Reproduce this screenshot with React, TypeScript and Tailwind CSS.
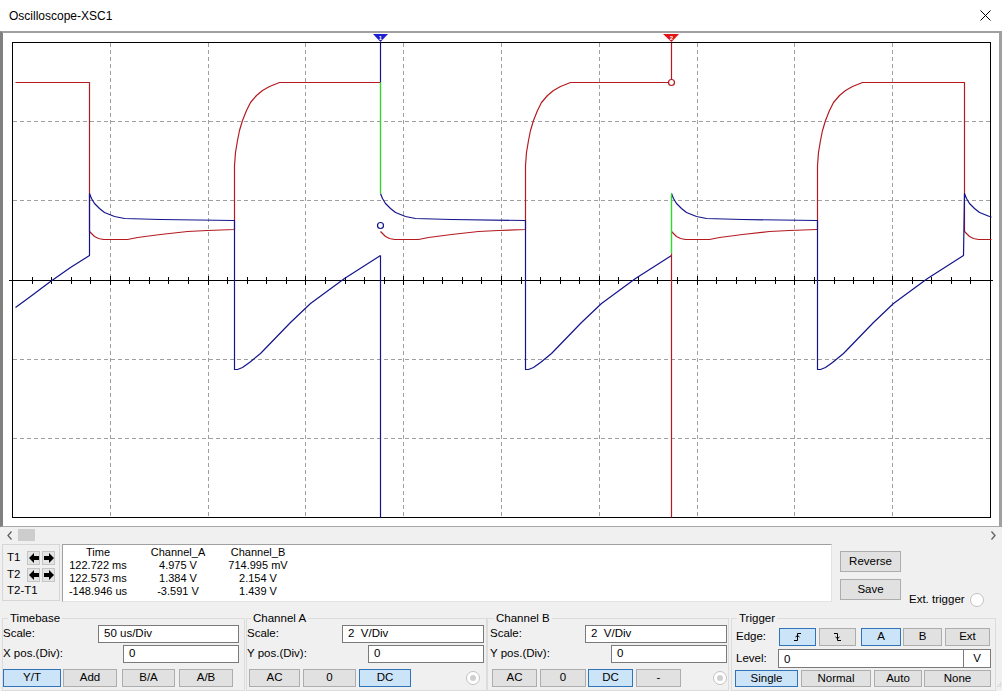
import React from 'react';

type Pt = [number, number];

// waveform geometry, in page pixels
const FALLS = [89, 380, 671, 964];
const RISES = [234, 525, 817];
const CURSORS = [380, 671];

const RED_LOW: Pt[] = [[0, 231], [2, 233], [5, 236], [9, 238], [14, 239], [38, 239], [48, 237], [71, 234], [98, 231], [118, 230], [145, 229]];
const RED_RISE: Pt[] = [[0, 165], [1, 152], [3, 140], [5, 130], [8, 120], [12, 110], [16, 102], [22, 95], [28, 90], [35, 86], [45, 82]];
const BLUE_DECAY: Pt[] = [[0, 193], [2, 198], [5, 203], [10, 208], [15, 212], [25, 216], [35, 218], [71, 219], [145, 220]];
const BLUE_RAMP: Pt[] = [[0, 369], [3, 369], [8, 367], [15, 362], [26, 353], [56, 322], [76, 303], [110, 278], [146, 255]];

const RED = '#b31b21';
const BLUE = '#14148c';
const GREEN = '#2ed82e';

const buildRed = () => {
  let d = 'M15,82 L89,82';
  FALLS.forEach((f, i) => {
    d += CURSORS.includes(f) ? ` M${f},231` : ` L${f},231`;
    RED_LOW.forEach(([dx, y]) => (d += ` L${f + dx},${y}`));
    const r = RISES[i];
    if (r !== undefined) {
      d += ` L${r},229`;
      RED_RISE.forEach(([dx, y]) => (d += ` L${r + dx},${y}`));
      d += ` L${FALLS[i + 1]},82`;
    }
  });
  return d;
};

const buildBlue = () => {
  let d = 'M15,307 L30,296 L50,281 L70,267 L89,255';
  FALLS.forEach((f, i) => {
    d += CURSORS.includes(f) ? ` M${f},193` : ` L${f},193`;
    BLUE_DECAY.forEach(([dx, y]) => (d += ` L${f + dx},${y}`));
    const r = RISES[i];
    if (r !== undefined) {
      d += ` L${r},220 L${r},369`;
      BLUE_RAMP.forEach(([dx, y]) => (d += ` L${r + dx},${y}`));
    }
  });
  return d;
};

const Plot = () => {
  const vx = Array.from({ length: 9 }, (_, i) => Math.round(12 + (i + 1) * 97.8) + 0.5);
  const hy = [121.5, 200.5, 359.5, 438.5];
  const ticks = Array.from({ length: 49 }, (_, i) => ({ x: Math.round(12 + (i + 1) * 19.56) + 0.5, major: (i + 1) % 5 === 0 }));
  return (
    <svg width={996} height={493} viewBox="3 33 996 493" className="block">
      <defs>
        <clipPath id="frame">
          <rect x={12} y={42} width={979} height={476} />
        </clipPath>
      </defs>
      <g stroke="#a0a0a0" strokeDasharray="4 3" shapeRendering="crispEdges">
        {vx.map((x) => (
          <line key={x} x1={x} y1={43} x2={x} y2={517} />
        ))}
        {hy.map((y) => (
          <line key={y} x1={13} y1={y} x2={990} y2={y} />
        ))}
      </g>
      <rect x={12.5} y={42.5} width={978} height={475} fill="none" stroke="#000" shapeRendering="crispEdges" />
      <g stroke="#000" shapeRendering="crispEdges">
        <line x1={9} y1={280.5} x2={993} y2={280.5} />
        {ticks.map((t) => (
          <line key={t.x} x1={t.x} y1={t.major ? 276 : 277} x2={t.x} y2={t.major ? 285 : 284} />
        ))}
      </g>
      <g clipPath="url(#frame)" transform="translate(0.5 0.5)" fill="none" strokeWidth={1.2} strokeLinejoin="round">
        <path d={buildRed()} stroke={RED} />
        <path d={buildBlue()} stroke={BLUE} />
        {/* cursor T1 */}
        <line x1={380} y1={42} x2={380} y2={82} stroke={BLUE} />
        <line x1={380} y1={82} x2={380} y2={193} stroke={GREEN} strokeWidth={1.4} />
        <line x1={380} y1={255} x2={380} y2={517} stroke={BLUE} />
        {/* cursor T2 */}
        <line x1={671} y1={42} x2={671} y2={82} stroke={RED} />
        <line x1={671} y1={193} x2={671} y2={253} stroke={GREEN} strokeWidth={1.4} />
        <line x1={671} y1={253} x2={671} y2={517} stroke={RED} />
        <circle cx={380} cy={225} r={3} stroke={BLUE} fill="#fff" />
        <circle cx={671} cy={82} r={3} stroke={RED} fill="#fff" />
      </g>
      <polygon points="373,34 388,34 380.5,42" fill="#1e1ed2" />
      <text x={380.5} y={39.5} fontSize={6} fontWeight={700} fill="#fff" textAnchor="middle" fontFamily="Liberation Sans, Arial, sans-serif">1</text>
      <polygon points="663,34 679,34 671.5,42" fill="#e31414" />
      <text x={671.5} y={39.5} fontSize={6} fontWeight={700} fill="#fff" textAnchor="middle" fontFamily="Liberation Sans, Arial, sans-serif">2</text>
    </svg>
  );
};

const Btn = ({ className = '', on = false, children }: { className?: string; on?: boolean; children?: React.ReactNode }) => (
  <div
    className={`flex shrink-0 items-center justify-center border ${
      on ? 'border-[#2f73b8] bg-[#cce4f7]' : 'border-[#adadad] bg-[#e1e1e1]'
    } ${className}`}
  >
    {children}
  </div>
);

const Field = ({ className = '', children }: { className?: string; children?: React.ReactNode }) => (
  <div className={`flex h-[18px] shrink-0 items-center border border-[#7a7a7a] bg-white pl-[5px] ${className}`}>{children}</div>
);

const Radio = ({ className = '', dot = false }: { className?: string; dot?: boolean }) => (
  <div className={`flex h-[14px] w-[14px] shrink-0 items-center justify-center rounded-full border border-[#c2c2c2] bg-white ${className}`}>
    {dot && <div className="h-[6px] w-[6px] rounded-full bg-[#cfcfcf]" />}
  </div>
);

const ArrowBtn = ({ left = false, className = '' }: { left?: boolean; className?: string }) => (
  <div className={`flex h-[14px] w-[13px] shrink-0 items-center justify-center border border-[#c4c4c4] bg-[#e4e4e4] ${className}`}>
    <svg width="10" height="10" viewBox="0 0 10 10">
      <path d={left ? 'M0 5 L5 0 V3 H10 V7 H5 V10 Z' : 'M10 5 L5 0 V3 H0 V7 H5 V10 Z'} fill="#000" />
    </svg>
  </div>
);

const EdgeIcon = ({ rising = false }: { rising?: boolean }) => (
  <svg width="9" height="8" viewBox="0 0 9 8" fill="none" stroke="#000" strokeWidth="1">
    {rising ? (
      <>
        <path d="M1 7.5 H4.5 V0.5 H8" />
        <path d="M2.5 4 L4.5 2.5 L6.5 4" />
      </>
    ) : (
      <>
        <path d="M1 0.5 H4.5 V7.5 H8" />
        <path d="M2.5 4 L4.5 5.5 L6.5 4" />
      </>
    )}
  </svg>
);

const Group = ({ title, className = '', legendClass = '', children }: { title: string; className?: string; legendClass?: string; children?: React.ReactNode }) => (
  <fieldset className={`mt-[7px] h-[80px] shrink-0 border border-[#dcdcdc] ${className}`}>
    <legend className={`px-[2px] leading-[14px] ${legendClass}`}>{title}</legend>
    {children}
  </fieldset>
);

const readings = [
  ['122.722 ms', '4.975 V', '714.995 mV'],
  ['122.573 ms', '1.384 V', '2.154 V'],
  ['-148.946 us', '-3.591 V', '1.439 V'],
];

export default function App() {
  return (
    <div className="h-[691px] w-[1002px] overflow-hidden bg-[#f0f0f0] font-['Liberation_Sans','Arial',sans-serif] text-[11.5px] text-black">
      {/* title bar */}
      <div className="flex h-[31px] items-center justify-between bg-white pl-[9px] pr-[11px]">
        <span className="text-[12px]">Oscilloscope-XSC1</span>
        <svg width="11" height="11" viewBox="0 0 11 11" stroke="#000" strokeWidth="1">
          <path d="M0.5 0.5 L10.5 10.5 M10.5 0.5 L0.5 10.5" />
        </svg>
      </div>

      {/* plot */}
      <div className="h-[496px] border-t-2 border-r-[3px] border-b border-l-[3px] border-t-[#a0a0a0] border-r-[#a0a0a0] border-b-[#a8a8a8] border-l-[#808080] bg-white">
        <Plot />
      </div>

      {/* scrollbar */}
      <div className="flex h-[16px] items-center">
        <svg className="ml-[7px]" width="5" height="9" viewBox="0 0 5 9">
          <path d="M4.5 0.5 L1 4.5 L4.5 8.5" stroke="#606060" strokeWidth="1.3" fill="none" />
        </svg>
        <div className="ml-[6px] h-[12px] w-[17px] bg-[#cdcdcd]" />
        <svg className="ml-auto mr-[6px]" width="5" height="9" viewBox="0 0 5 9">
          <path d="M0.5 0.5 L4 4.5 L0.5 8.5" stroke="#606060" strokeWidth="1.3" fill="none" />
        </svg>
      </div>

      {/* cursor readings */}
      <div className="flex h-[61px] items-start">
        <div className="ml-[2px] mt-[1px] flex h-[57px] w-[58px] shrink-0 flex-col border border-[#d6d6d6] pl-[4px]">
          <div className="mt-[6px] flex h-[14px] items-center">
            <span className="w-[20px]">T1</span>
            <ArrowBtn left />
            <ArrowBtn className="ml-[2px]" />
          </div>
          <div className="mt-[3px] flex h-[14px] items-center">
            <span className="w-[20px]">T2</span>
            <ArrowBtn left />
            <ArrowBtn className="ml-[2px]" />
          </div>
          <div className="mt-[2px] leading-[13px]">T2-T1</div>
        </div>

        <div className="ml-[2px] mt-[1px] h-[58px] w-[770px] shrink-0 border border-t-[#a0a0a0] border-r-[#e3e3e3] border-b-[#e3e3e3] border-l-[#a0a0a0] bg-white pt-[1px] text-[11px] leading-[13px]">
          <div className="flex">
            <span className="w-[70px] text-center">Time</span>
            <span className="ml-[5px] w-[80px] text-center">Channel_A</span>
            <span className="w-[80px] text-center">Channel_B</span>
          </div>
          {readings.map((r) => (
            <div key={r[0]} className="flex">
              <span className="w-[70px] text-center">{r[0]}</span>
              <span className="ml-[5px] w-[80px] text-center">{r[1]}</span>
              <span className="w-[80px] text-center">{r[2]}</span>
            </div>
          ))}
        </div>

        <div className="ml-[8px] flex w-[61px] shrink-0 flex-col">
          <Btn className="mt-[8px] h-[21px]">Reverse</Btn>
          <Btn className="mt-[7px] h-[21px]">Save</Btn>
        </div>

        <div className="ml-[8px] mt-[50px] flex h-[14px] items-center">
          <span>Ext. trigger</span>
          <Radio className="ml-[5px]" />
        </div>
      </div>

      {/* controls */}
      <div className="flex h-[87px] items-start">
        <Group title="Timebase" className="ml-[2px] w-[243px]" legendClass="ml-[5px]">
          <div className="flex h-[18px] items-center">
            <span>Scale:</span>
            <Field className="ml-auto mr-[5px] w-[141px]">50 us/Div</Field>
          </div>
          <div className="mt-[2px] flex h-[18px] items-center">
            <span>X pos.(Div):</span>
            <Field className="ml-auto mr-[5px] w-[116px]">0</Field>
          </div>
          <div className="mt-[6px] flex h-[18px] items-center">
            <Btn on className="h-[18px] w-[58px]">Y/T</Btn>
            <Btn className="ml-[2px] h-[18px] w-[54px]">Add</Btn>
            <Btn className="ml-[5px] h-[18px] w-[53px]">B/A</Btn>
            <Btn className="ml-[4px] h-[18px] w-[54px]">A/B</Btn>
          </div>
        </Group>

        <Group title="Channel A" className="ml-[1px] w-[241px]" legendClass="ml-[4px]">
          <div className="flex h-[18px] items-center">
            <span>Scale:</span>
            <Field className="ml-auto mr-[2px] w-[142px]">2&nbsp;&nbsp;V/Div</Field>
          </div>
          <div className="mt-[2px] flex h-[18px] items-center">
            <span>Y pos.(Div):</span>
            <Field className="ml-auto mr-[2px] w-[116px]">0</Field>
          </div>
          <div className="mt-[6px] flex h-[18px] items-center">
            <Btn className="ml-[2px] h-[18px] w-[51px]">AC</Btn>
            <Btn className="ml-[3px] h-[18px] w-[53px]">0</Btn>
            <Btn on className="ml-[3px] h-[18px] w-[52px]">DC</Btn>
            <Radio dot className="ml-auto mr-[6px] bg-[#f4f4f4]" />
          </div>
        </Group>

        <Group title="Channel B" className="w-[242px]" legendClass="ml-[6px]">
          <div className="flex h-[18px] items-center">
            <span className="pl-[2px]">Scale:</span>
            <Field className="ml-auto mr-[1px] w-[142px]">2&nbsp;&nbsp;V/Div</Field>
          </div>
          <div className="mt-[2px] flex h-[18px] items-center">
            <span className="pl-[2px]">Y pos.(Div):</span>
            <Field className="ml-auto mr-[1px] w-[116px]">0</Field>
          </div>
          <div className="mt-[6px] flex h-[18px] items-center">
            <Btn className="ml-[4px] h-[18px] w-[45px]">AC</Btn>
            <Btn className="ml-[3px] h-[18px] w-[46px]">0</Btn>
            <Btn on className="ml-[2px] h-[18px] w-[45px]">DC</Btn>
            <Btn className="ml-[3px] h-[18px] w-[45px]">-</Btn>
            <Radio dot className="ml-auto mr-[1px] bg-[#f4f4f4]" />
          </div>
        </Group>

        <Group title="Trigger" className="ml-[2px] w-[265px]" legendClass="ml-[5px]">
          <div className="mt-[3px] flex h-[18px] items-center pl-[4px]">
            <span className="w-[43px]">Edge:</span>
            <Btn on className="h-[18px] w-[37px]">
              <EdgeIcon rising />
            </Btn>
            <Btn className="ml-[3px] h-[18px] w-[37px]">
              <EdgeIcon />
            </Btn>
            <Btn on className="ml-[5px] h-[18px] w-[40px]">A</Btn>
            <Btn className="ml-[2px] h-[18px] w-[39px]">B</Btn>
            <Btn className="ml-[3px] h-[18px] w-[45px]">Ext</Btn>
          </div>
          <div className="mt-[3px] flex h-[19px] items-center pl-[4px]">
            <span className="w-[42px]">Level:</span>
            <Field className="h-[19px] w-[186px] pt-[3px]">0</Field>
            <div className="-ml-[1px] flex h-[19px] w-[28px] items-center justify-center border border-[#7a7a7a] bg-white">V</div>
          </div>
          <div className="mt-[2px] flex h-[17px] items-center pl-[3px]">
            <Btn on className="h-[17px] w-[63px]">Single</Btn>
            <Btn className="ml-[3px] h-[17px] w-[70px]">Normal</Btn>
            <Btn className="ml-[3px] h-[17px] w-[48px]">Auto</Btn>
            <Btn className="ml-[2px] h-[17px] w-[67px]">None</Btn>
          </div>
        </Group>

        <svg className="mt-[78px] ml-[1px]" width="6" height="6" viewBox="0 0 6 6" fill="#b4b4b4">
          <rect x="4" y="0" width="1" height="1" />
          <rect x="2" y="2" width="1" height="1" />
          <rect x="4" y="2" width="1" height="1" />
          <rect x="0" y="4" width="1" height="1" />
          <rect x="2" y="4" width="1" height="1" />
          <rect x="4" y="4" width="1" height="1" />
        </svg>
      </div>
    </div>
  );
}
